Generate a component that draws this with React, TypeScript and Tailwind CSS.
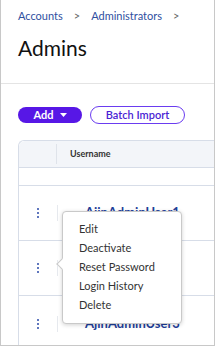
import React from 'react';

const rows = ['AjinAdminUser1', 'AjinAdminUser2', 'AjinAdminUser3'];
const menuItems = ['Edit', 'Deactivate', 'Reset Password', 'Login History', 'Delete'];

const Kebab: React.FC = () => (
  <div className="flex flex-col items-center gap-[2px]">
    <span className="w-[2px] h-[2px] rounded-full bg-[#2b4aa8]" />
    <span className="w-[2px] h-[2px] rounded-full bg-[#2b4aa8]" />
    <span className="w-[2px] h-[2px] rounded-full bg-[#2b4aa8]" />
  </div>
);

const App: React.FC = () => {
  return (
    <div
      className="relative w-[215px] h-[346px] overflow-hidden bg-white border-x border-b border-[#c8c8c8]"
      style={{ fontFamily: 'Lato, "Noto Sans", sans-serif' }}
    >
      {/* Header */}
      <div className="px-[17px] pt-[9px]">
        <div className="flex items-center gap-[11px] text-[11px] text-[#2f4f9f] leading-[14px]">
          <span>Accounts</span>
          <span className="text-[#666]">&gt;</span>
          <span>Administrators</span>
          <span className="text-[#666]">&gt;</span>
        </div>
        <h1 className="mt-[13px] text-[21px] leading-[24px] text-[#111]">Admins</h1>
      </div>
      <div className="mt-[23px] border-t border-[#e4e4e4]" />

      {/* Actions */}
      <div className="flex items-center gap-[8px] pl-[17px] mt-[22px]">
        <button className="flex items-center justify-center gap-[6px] w-[64px] h-[16px] rounded-full bg-[#5717e6] text-white text-[11px] font-bold">
          <span>Add</span>
          <svg width="7" height="4" viewBox="0 0 7 4">
            <path d="M0 0 L7 0 L3.5 4 Z" fill="white" />
          </svg>
        </button>
        <button className="flex items-center justify-center w-[95px] h-[18px] rounded-full border border-[#6a3cf0] text-[#4a1fd4] text-[11px] font-semibold">
          Batch Import
        </button>
      </div>

      {/* Table */}
      <div className="ml-[17px] mt-[16px] w-[260px] border-l border-t border-[#d7dde8] rounded-tl-[6px]">
        <div className="flex h-[27px] items-center bg-[#f3f5f9] border-b border-[#d7dde8] rounded-tl-[6px]">
          <div className="w-[38px] h-[20px] border-r border-[#dfe3ea]" />
          <div className="pl-[13px] text-[9px] font-bold text-[#333]">Username</div>
        </div>
        <div className="h-[18px] border-b border-[#d7dde8]" />
        {rows.map((name, i) => (
          <div key={name} className={`flex h-[55px] items-center ${i < 2 ? 'border-b border-[#d7dde8]' : ''}`}>
            <div className="w-[38px] flex justify-center">
              <Kebab />
            </div>
            <div className="h-[16px] border-l border-[#e6e9ee]" />
            <div className="pl-[27px] text-[13px] font-bold text-[#1f3f9a]">{name}</div>
          </div>
        ))}
      </div>

      {/* Context menu */}
      <div className="absolute left-[61px] top-[211px] w-[120px] rounded-[4px] border border-[#c9c9c9] bg-white shadow-[0_1px_4px_rgba(0,0,0,0.18)] py-[8px]">
        <div className="absolute left-[-5px] top-[48px] w-[8px] h-[8px] rotate-45 bg-white border-l border-b border-[#c9c9c9]" />
        {menuItems.map((item) => (
          <div key={item} className="pl-[16px] h-[19px] flex items-center text-[11px] text-[#333]">
            {item}
          </div>
        ))}
      </div>
    </div>
  );
};

export default App;
